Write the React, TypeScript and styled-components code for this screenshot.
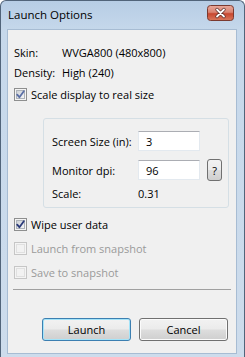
import { FC } from 'react';
import styled, { createGlobalStyle } from 'styled-components';

const GlobalStyle = createGlobalStyle`
  html, body {
    margin: 0;
    padding: 0;
    background: #ffffff;
  }
  body {
    font-family: "Open Sans", "Noto Sans", "Liberation Sans", sans-serif;
  }
`;

const Window = styled.div`
  width: 245px;
  height: 357px;
  box-sizing: border-box;
  display: flex;
  flex-direction: column;
  background: linear-gradient(180deg, #b7cde5 0px, #c6d8eb 30px, #cddcec 100%);
  border: 1px solid #51647a;
  border-bottom: none;
  border-radius: 6px 6px 0 0;
  overflow: hidden;
`;

const TitleBar = styled.div`
  height: 28px;
  flex: 0 0 28px;
  display: flex;
  align-items: center;
  justify-content: space-between;
  padding: 0 10px 0 7px;
  box-sizing: border-box;
`;

const Title = styled.span`
  font-size: 11.5px;
  color: #000;
  margin-top: -2px;
`;

const CloseButton = styled.div`
  width: 27px;
  height: 16px;
  margin-top: -4px;
  display: flex;
`;

const Client = styled.div`
  flex: 1;
  margin: 0 7px 3px 6px;
  background: #f0f0f0;
  border: 1px solid #a7bcd3;
  display: flex;
  flex-direction: column;
  padding: 12px 0 0 6px;
  font-size: 11px;
  color: #000;
  white-space: nowrap;
`;

const InfoRow = styled.div`
  display: flex;
  align-items: center;
  height: 20px;
`;

const InfoLabel = styled.span`
  width: 48px;
`;

const CheckRow = styled.label<{ $disabled?: boolean }>`
  display: flex;
  align-items: center;
  gap: 4px;
  height: 24px;
  color: ${(p) => (p.$disabled ? '#9a9a9a' : '#000')};
`;

const GroupBox = styled.div`
  margin: 12px 0 0 29px;
  width: 186px;
  box-sizing: border-box;
  border: 1px solid #d5dfe5;
  border-radius: 3px;
  padding: 12px 0 5px 8px;
  display: grid;
  grid-template-columns: 86px 62px auto;
  row-gap: 8px;
  align-items: center;
`;

const FieldInput = styled.div`
  height: 20px;
  box-sizing: border-box;
  background: #fff;
  border: 1px solid #e3e9ef;
  border-top-color: #abadb3;
  padding: 0 7px;
  display: flex;
  align-items: center;
`;

const HelpButton = styled.div`
  margin-left: 7px;
  width: 15px;
  height: 22px;
  box-sizing: border-box;
  border: 1px solid #707070;
  border-radius: 3px;
  background: linear-gradient(180deg, #f2f2f2 0%, #ebebeb 48%, #dddddd 52%, #cfcfcf 100%);
  display: flex;
  align-items: center;
  justify-content: center;
  font-size: 11px;
`;

const ScaleText = styled.span`
  height: 16px;
  line-height: 16px;
  margin-top: -3px;
`;

const Checks = styled.div`
  margin-top: 4px;
  display: flex;
  flex-direction: column;
`;

const Separator = styled.div`
  margin: 5px 0 0 -1px;
  width: 218px;
  height: 1px;
  background: #a0a0a0;
`;

const ButtonRow = styled.div`
  margin-top: 28px;
  display: flex;
  gap: 8px;
  padding-left: 28px;
`;

const PushButton = styled.div<{ $default?: boolean }>`
  width: 89px;
  height: 23px;
  box-sizing: border-box;
  border: 1px solid ${(p) => (p.$default ? '#3c7fb1' : '#707070')};
  box-shadow: ${(p) => (p.$default ? 'inset 0 0 0 1px #a4e4f9' : 'inset 0 0 0 1px #fbfbfb')};
  border-radius: 3px;
  background: linear-gradient(180deg, #f2f2f2 0%, #ebebeb 48%, #dddddd 52%, #cfcfcf 100%);
  display: flex;
  align-items: center;
  justify-content: center;
`;

type BoxProps = { checked?: boolean; disabled?: boolean; pale?: boolean };

const CheckBox: FC<BoxProps> = ({ checked, disabled, pale }) => (
  <svg width="13" height="13" viewBox="0 0 13 13">
    <defs>
      <linearGradient id="cbIn" x1="0" y1="0" x2="1" y2="1">
        <stop offset="0" stopColor="#cbcfd5" />
        <stop offset="1" stopColor="#f7f7f7" />
      </linearGradient>
    </defs>
    <rect x="0.5" y="0.5" width="12" height="12" fill="#f4f4f4" stroke={disabled ? '#c6c6c6' : '#8e8f8f'} />
    {!disabled && <rect x="2.5" y="2.5" width="8" height="8" fill="url(#cbIn)" stroke="#aeb3b9" />}
    {disabled && <rect x="2.5" y="2.5" width="8" height="8" fill="#f2f2f2" stroke="#e0e0e0" />}
    {checked && (
      <path
        d="M3.2 6.6 L5.4 9.2 L9.8 3.2"
        fill="none"
        stroke={pale ? '#5b6fa6' : '#2b3b7a'}
        strokeWidth="1.8"
        strokeLinecap="round"
        strokeLinejoin="round"
      />
    )}
  </svg>
);

const CloseGlyph: FC = () => (
  <svg width="27" height="16" viewBox="0 0 27 16">
    <defs>
      <linearGradient id="closeBg" x1="0" y1="0" x2="0" y2="1">
        <stop offset="0" stopColor="#e9a99b" />
        <stop offset="0.45" stopColor="#d98472" />
        <stop offset="0.55" stopColor="#c8472f" />
        <stop offset="1" stopColor="#d97a5e" />
      </linearGradient>
    </defs>
    <rect x="0.5" y="0.5" width="26" height="15" rx="3" fill="url(#closeBg)" stroke="#7a3a30" />
    <path d="M10 4.5 L17 11.5 M17 4.5 L10 11.5" stroke="#5a2a24" strokeWidth="3.2" strokeLinecap="round" />
    <path d="M10 4.5 L17 11.5 M17 4.5 L10 11.5" stroke="#ffffff" strokeWidth="1.8" strokeLinecap="round" />
  </svg>
);

const App: FC = () => {
  return (
    <>
      <GlobalStyle />
      <Window>
        <TitleBar>
          <Title>Launch Options</Title>
          <CloseButton>
            <CloseGlyph />
          </CloseButton>
        </TitleBar>
        <Client>
          <InfoRow>
            <InfoLabel>Skin:</InfoLabel>
            <span>WVGA800 (480x800)</span>
          </InfoRow>
          <InfoRow>
            <InfoLabel>Density:</InfoLabel>
            <span>High (240)</span>
          </InfoRow>
          <CheckRow>
            <CheckBox checked pale />
            Scale display to real size
          </CheckRow>
          <GroupBox>
            <span>Screen Size (in):</span>
            <FieldInput>3</FieldInput>
            <span />
            <span>Monitor dpi:</span>
            <FieldInput>96</FieldInput>
            <HelpButton>?</HelpButton>
            <ScaleText>Scale:</ScaleText>
            <ScaleText>0.31</ScaleText>
            <span />
          </GroupBox>
          <Checks>
            <CheckRow>
              <CheckBox checked />
              Wipe user data
            </CheckRow>
            <CheckRow $disabled>
              <CheckBox disabled />
              Launch from snapshot
            </CheckRow>
            <CheckRow $disabled>
              <CheckBox disabled />
              Save to snapshot
            </CheckRow>
          </Checks>
          <Separator />
          <ButtonRow>
            <PushButton $default>Launch</PushButton>
            <PushButton>Cancel</PushButton>
          </ButtonRow>
        </Client>
      </Window>
    </>
  );
};

export default App;
